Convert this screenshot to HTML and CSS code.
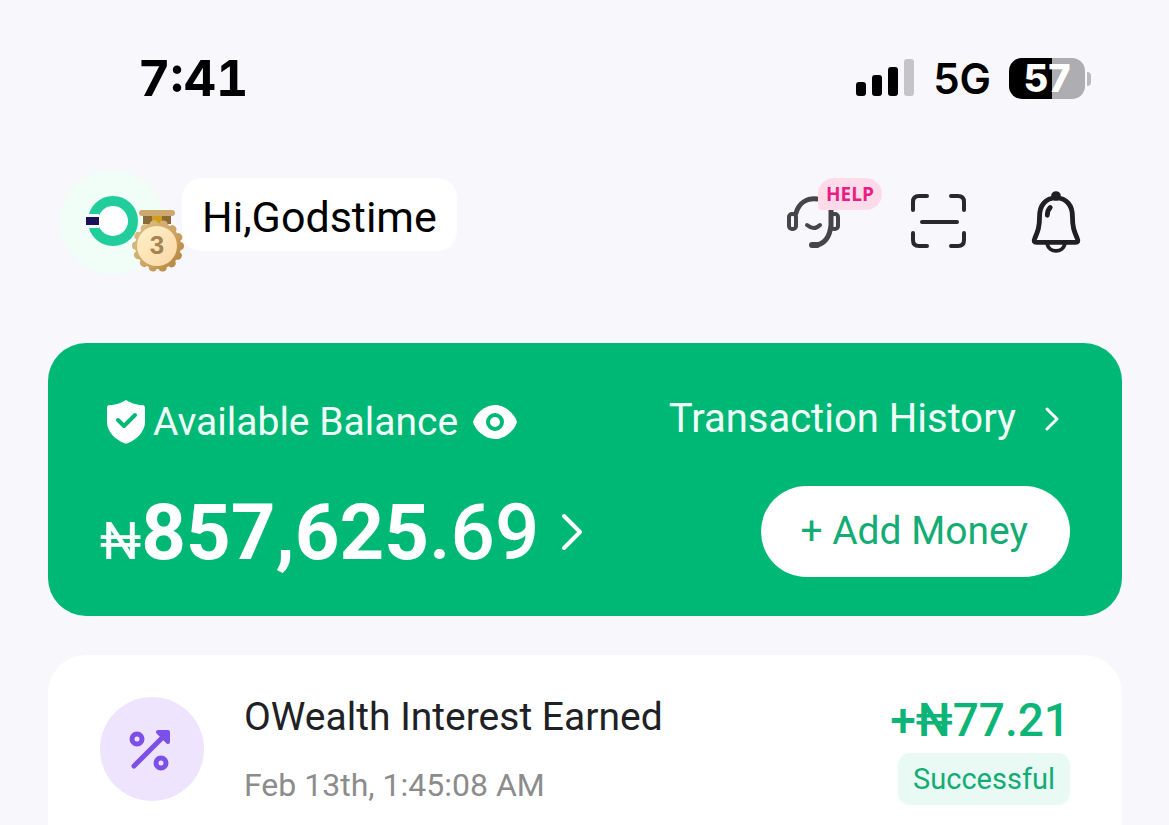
FILE: index.html
```html
<!DOCTYPE html>
<html lang="en">
<head>
<meta charset="utf-8">
<meta name="viewport" content="width=device-width, initial-scale=1">
<title>Wallet home</title>
<link rel="stylesheet" href="styles.css">
</head>
<body>
<div class="status-bar">
  <time class="clock">7:41</time>
  <div class="status-right">
    <svg class="signal" width="60" height="40" viewBox="0 0 60 40" aria-label="Signal strength">
      <rect x="1" y="24" width="10" height="14" rx="3"/>
      <rect x="17" y="17" width="10" height="21" rx="3"/>
      <rect x="33" y="9" width="10" height="29" rx="3"/>
      <rect x="49" y="1" width="10" height="37" rx="3" fill="#c5c5c9"/>
    </svg>
    <span class="network">5G</span>
    <div class="battery"><span class="battery-level">57</span><span class="battery-tip"></span></div>
  </div>
</div>

<header class="header">
  <button class="profile" aria-label="Profile">
    <svg width="130" height="108" viewBox="0 0 130 108">
      <defs>
        <linearGradient id="rim" gradientUnits="userSpaceOnUse" x1="76" y1="60" x2="122" y2="100"><stop offset="0" stop-color="#dcbd83"/><stop offset=".6" stop-color="#c99f5c"/><stop offset="1" stop-color="#b07f38"/></linearGradient>
        <linearGradient id="face" x1="0" y1="0" x2="1" y2="1"><stop offset="0" stop-color="#fff0c8"/><stop offset="1" stop-color="#fbd7a6"/></linearGradient>
      </defs>
      <circle cx="52" cy="54" r="52" fill="#f1fef8"/>
      <circle cx="53" cy="53" r="20" fill="#fff" stroke="#20cd9b" stroke-width="10"/>
      <path d="M26 46H39V60H26Z" fill="#f1fef8"/>
      <path d="M26 49H39V57H26Z" fill="#1c1058"/>
      <path d="M83 48H111V56H83Z" fill="#8a6a38"/>
      <path d="M92 48H102V56H92Z" fill="#cf9f1a"/>
      <rect x="79" y="42" width="36" height="6" rx="3" fill="#cda970"/>
      <path d="M87 56H108L112 62H82Z" fill="#d2ad6f"/>
      <circle cx="98" cy="78" r="23" fill="url(#rim)"/>
      <circle cx="98" cy="78" r="22" fill="none" stroke="url(#rim)" stroke-width="8" stroke-linecap="round" stroke-dasharray="0.1 9.77"/>
      <circle cx="97" cy="78" r="20" fill="url(#face)"/>
      <text x="97" y="86" class="medal-rank">3</text>
    </svg>
  </button>
  <h1 class="greeting">Hi,Godstime</h1>
  <nav class="actions">
    <button class="action support" aria-label="Support">
      <svg width="60" height="60" viewBox="0 0 60 60" fill="none" stroke="#464648" stroke-width="5" stroke-linecap="round">
        <path d="M11 21C14 11 22 6 32 7"/>
        <path d="M46 15V33C45 43 41 51 32 53"/>
        <rect x="4" y="22" width="7" height="15" rx="3" stroke-width="4"/>
        <rect x="46" y="22" width="7" height="15" rx="3" stroke-width="4"/>
        <path d="M22 33Q29 39 35 33" stroke-width="4"/>
        <path d="M27 53H32" stroke-width="6"/>
      </svg>
      <span class="help">HELP</span>
    </button>
    <button class="action" aria-label="Scan">
      <svg width="60" height="60" viewBox="-3 0 60 60" fill="none" stroke="#29292b" stroke-width="4" stroke-linecap="round">
        <path d="M4 18V10Q4 4 10 4H18M42 4H49Q55 4 55 10V18M4 41V48Q4 54 10 54H18M42 54H49Q55 54 55 48V41"/>
        <path d="M13 30H48"/>
      </svg>
    </button>
    <button class="action bell" aria-label="Notifications">
      <svg width="58" height="64" viewBox="0 2 60 66" fill="none" stroke="#202024" stroke-width="5" stroke-linecap="round" stroke-linejoin="round">
        <path d="M30 8C19 8 13 16 13 27C13 39 11 43 8 50Q6 54 10 54H50Q54 54 52 50C49 43 47 39 47 27C47 16 41 8 30 8Z"/>
        <path d="M21 56C23 65 37 65 39 56" stroke-width="4"/>
        <circle cx="30" cy="6" r="4" fill="#202024" stroke-width="2"/>
        <path d="M21 26Q21 21 24 18"/>
      </svg>
    </button>
  </nav>
</header>

<main class="content">
  <section class="balance-card">
    <div class="balance-row top-row">
      <div class="balance-label">
        <svg width="40" height="46" viewBox="0 0 40 46">
          <path d="M20 1C24 4 32 6 36 6Q39 6 39 9V23C39 33 30 41 22 44Q20 45 18 44C10 41 1 33 1 23V9Q1 6 4 6C8 6 16 4 20 1Z" fill="#fff"/>
          <path d="M12 21L18 27L29 16" fill="none" stroke="#00b876" stroke-width="4" stroke-linecap="round" stroke-linejoin="round"/>
        </svg>
        <span class="label">Available Balance</span>
        <button class="eye" aria-label="Hide balance">
          <svg width="46" height="38" viewBox="0 0 46 38">
            <path d="M1 19C3 11 13 2 23 2S43 11 45 19C43 27 33 36 23 36S3 27 1 19Z" fill="#fff"/>
            <circle cx="23" cy="19" r="7" fill="none" stroke="#00b876" stroke-width="4"/>
          </svg>
        </button>
      </div>
      <a class="history" href="#history"><span>Transaction History</span>
        <svg width="16" height="24" viewBox="0 0 16 24" fill="none" stroke="#fff" stroke-width="3" stroke-linecap="round" stroke-linejoin="round"><path d="M3 2L13 12L3 22"/></svg>
      </a>
    </div>
    <div class="balance-row">
      <a class="amount" href="#balance">
        <span class="figure"><span class="currency">₦</span>857,625<span class="cents">.69</span></span>
        <svg width="22" height="38" viewBox="0 0 22 38" fill="none" stroke="#fff" stroke-width="4" stroke-linecap="round" stroke-linejoin="round"><path d="M3 3L19 19L3 35"/></svg>
      </a>
      <button class="add-money">+ Add Money</button>
    </div>
  </section>

  <section class="transactions">
    <article class="transaction">
      <div class="tx-icon">
        <svg width="48" height="48" viewBox="0 0 48 48" fill="none" stroke="#7c4fea" stroke-width="5" stroke-linecap="round" stroke-linejoin="round">
          <circle cx="9" cy="14" r="5"/>
          <circle cx="33" cy="38" r="5"/>
          <path d="M6 41L37 10"/>
          <path d="M30 7H40V17Z" fill="#7c4fea" stroke-width="4"/>
        </svg>
      </div>
      <div class="tx-text">
        <h2 class="tx-title">OWealth Interest Earned</h2>
        <time class="tx-date">Feb 13th, 1:45:08 AM</time>
      </div>
      <div class="tx-result">
        <span class="tx-amount">+₦77.21</span>
        <span class="tx-status">Successful</span>
      </div>
    </article>
  </section>
</main>
</body>
</html>
```
FILE: styles.css
```css
* { box-sizing: border-box; }

body {
  margin: 0;
  background: #f7f7fc;
  color: #000;
  font-family: Roboto, sans-serif;
}

svg { display: block; flex: none; }

button {
  border: 0;
  padding: 0;
  background: none;
  font: inherit;
  color: inherit;
}

a { color: inherit; text-decoration: none; }
h1, h2 { margin: 0; font-weight: 400; }

.status-bar {
  display: flex;
  justify-content: space-between;
  align-items: center;
  padding: 48px 78px 0 138px;
  font-family: Inter, sans-serif;
}

.clock { font-size: 50px; line-height: 60px; font-weight: 700; font-variant-numeric: tabular-nums; }
.status-right { display: flex; align-items: center; }
.network { margin-left: 18px; padding-top: 2px; font-size: 42px; line-height: 58px; font-weight: 600; }

.battery {
  position: relative;
  width: 76px;
  height: 41px;
  margin: 0 6px 0 18px;
  border-radius: 13px;
  background: linear-gradient(to right, #000 57%, #adadb2 57%);
  color: #fff;
  text-align: center;
}

.battery-level { font-size: 38px; line-height: 41px; font-weight: 800; }

.battery-tip {
  position: absolute;
  left: 78px;
  top: 14px;
  width: 4px;
  height: 14px;
  border-radius: 0 6px 6px 0;
  background: #b9b9be;
}

.header {
  display: flex;
  align-items: flex-start;
  padding: 60px 84px 0 60px;
}

.greeting {
  margin-top: 10px;
  margin-left: -8px;
  padding: 15px 20px 10px;
  border-radius: 20px;
  background: #fff;
  font-size: 43px;
  line-height: 48px;
}

.medal-rank {
  font: 700 26px "Liberation Sans", sans-serif;
  fill: #a58452;
  text-anchor: middle;
}

.actions { display: flex; align-items: flex-start; gap: 61px; margin: 24px 0 0 auto; }
.action { position: relative; }
.bell svg { overflow: visible; }

.help {
  position: absolute;
  left: 33px;
  top: -14px;
  padding: 0 8px;
  border-radius: 16px 16px 16px 4px;
  background: #ffdbea;
  color: #e91e83;
  font: 700 19px/32px "Open Sans", sans-serif;
}

.content {
  display: flex;
  flex-direction: column;
  gap: 39px;
  padding: 67px 47px 0 48px;
}

.balance-card {
  padding: 50px 52px 39px;
  border-radius: 38px;
  background: #00b876;
  color: #fff;
}

.balance-row { display: flex; justify-content: space-between; align-items: center; }
.top-row { align-items: flex-start; margin-bottom: 41px; padding: 0 10px 0 6px; }
.balance-label { display: flex; align-items: center; gap: 7px; padding-top: 6px; font-size: 39px; line-height: 46px; color: #effff8; }
.eye { margin-left: 7px; }
.history { display: flex; align-items: center; gap: 28px; font-size: 40px; line-height: 52px; color: #effff8; }
.amount { display: flex; align-items: center; gap: 22px; }
.figure { padding-top: 2px; font-size: 78px; line-height: 78px; font-weight: 700; }
.currency { font-size: 52px; line-height: 52px; font-weight: 400; }
.cents { font-weight: 500; }

.add-money {
  padding: 0 42px 0 39px;
  border-radius: 46px;
  background: #fff;
  color: #14ac75;
  font-size: 39px;
  line-height: 91px;
}

.transactions {
  border-radius: 38px 38px 0 0;
  background: #fff;
}

.transaction {
  display: flex;
  align-items: flex-start;
  padding: 36px 52px 20px;
}

.tx-icon {
  display: grid;
  place-items: center;
  width: 104px;
  height: 104px;
  margin: 6px 40px 0 0;
  border-radius: 50%;
  background: #efe4fe;
}

.tx-text { display: flex; flex-direction: column; gap: 20px; }
.tx-title { font-size: 39px; line-height: 52px; color: #202124; }
.tx-date { font-size: 32px; line-height: 44px; color: #8c8c8c; }

.tx-result { display: flex; flex-direction: column; align-items: flex-end; gap: 4px; margin-left: auto; }
.tx-amount { font-size: 46px; line-height: 58px; font-weight: 500; color: #0db477; }
.tx-status { padding: 0 15px; border-radius: 12px; background: #e9f9f4; color: #14ac75; font-size: 29px; line-height: 52px; }
```
